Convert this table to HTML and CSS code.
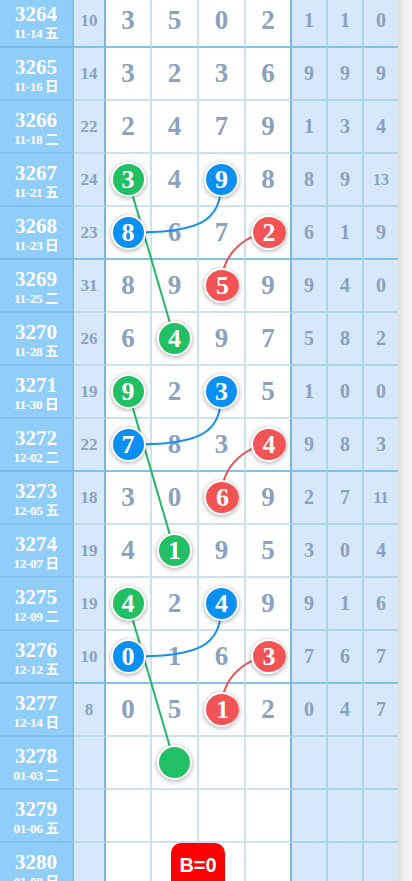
FILE: index.html
```html
<!DOCTYPE html>
<html lang="zh">
<head>
  <meta charset="UTF-8">
  <meta name="viewport" content="width=device-width, initial-scale=1.0">
  <title>走势图</title>
  <link rel="stylesheet" href="styles.css">
</head>
<body>
  <div class="board">
    <svg class="links" width="398" height="901" viewBox="0 0 398 901">
      <!-- green: col1 -> col2, three rows down -->
      <path class="lk green" d="M128 184.5 L174.5 343.5"/>
      <path class="lk green" d="M128 396.5 L174.5 555.5"/>
      <path class="lk green" d="M128 608.5 L174.5 767.5"/>
      <!-- blue: col3 -> col1, next row -->
      <path class="lk blue" d="M221.5 184.5 C221.5 229 198 237.5 128 237.5"/>
      <path class="lk blue" d="M221.5 396.5 C221.5 441 198 449.5 128 449.5"/>
      <path class="lk blue" d="M221.5 608.5 C221.5 653 198 661.5 128 661.5"/>
      <!-- red: col4 -> col3, next row -->
      <path class="lk red" d="M268 237.5 C250 239.5 221.5 254.5 221.5 290.5"/>
      <path class="lk red" d="M268 449.5 C250 451.5 221.5 466.5 221.5 502.5"/>
      <path class="lk red" d="M268 661.5 C250 663.5 221.5 678.5 221.5 714.5"/>
    </svg>

    <div class="row end">
      <div class="c issue"><b>3264</b><span>11-14 五</span></div>
      <div class="c miss">10</div>
      <div class="c d">3</div><div class="c d">5</div><div class="c d">0</div><div class="c d last">2</div>
      <div class="c r">1</div><div class="c r">1</div><div class="c r">0</div>
    </div>
    <div class="row">
      <div class="c issue"><b>3265</b><span>11-16 日</span></div>
      <div class="c miss">14</div>
      <div class="c d">3</div><div class="c d">2</div><div class="c d">3</div><div class="c d last">6</div>
      <div class="c r">9</div><div class="c r">9</div><div class="c r">9</div>
    </div>
    <div class="row">
      <div class="c issue"><b>3266</b><span>11-18 二</span></div>
      <div class="c miss">22</div>
      <div class="c d">2</div><div class="c d">4</div><div class="c d">7</div><div class="c d last">9</div>
      <div class="c r">1</div><div class="c r">3</div><div class="c r">4</div>
    </div>
    <div class="row">
      <div class="c issue"><b>3267</b><span>11-21 五</span></div>
      <div class="c miss">24</div>
      <div class="c d"><i class="ball g">3</i></div><div class="c d">4</div><div class="c d"><i class="ball b">9</i></div><div class="c d last">8</div>
      <div class="c r">8</div><div class="c r">9</div><div class="c r two">13</div>
    </div>
    <div class="row end">
      <div class="c issue"><b>3268</b><span>11-23 日</span></div>
      <div class="c miss">23</div>
      <div class="c d"><i class="ball b">8</i></div><div class="c d">6</div><div class="c d">7</div><div class="c d last"><i class="ball r">2</i></div>
      <div class="c r">6</div><div class="c r">1</div><div class="c r">9</div>
    </div>
    <div class="row">
      <div class="c issue"><b>3269</b><span>11-25 二</span></div>
      <div class="c miss">31</div>
      <div class="c d">8</div><div class="c d">9</div><div class="c d"><i class="ball r">5</i></div><div class="c d last">9</div>
      <div class="c r">9</div><div class="c r">4</div><div class="c r">0</div>
    </div>
    <div class="row">
      <div class="c issue"><b>3270</b><span>11-28 五</span></div>
      <div class="c miss">26</div>
      <div class="c d">6</div><div class="c d"><i class="ball g">4</i></div><div class="c d">9</div><div class="c d last">7</div>
      <div class="c r">5</div><div class="c r">8</div><div class="c r">2</div>
    </div>
    <div class="row">
      <div class="c issue"><b>3271</b><span>11-30 日</span></div>
      <div class="c miss">19</div>
      <div class="c d"><i class="ball g">9</i></div><div class="c d">2</div><div class="c d"><i class="ball b">3</i></div><div class="c d last">5</div>
      <div class="c r">1</div><div class="c r">0</div><div class="c r">0</div>
    </div>
    <div class="row end">
      <div class="c issue"><b>3272</b><span>12-02 二</span></div>
      <div class="c miss">22</div>
      <div class="c d"><i class="ball b">7</i></div><div class="c d">8</div><div class="c d">3</div><div class="c d last"><i class="ball r">4</i></div>
      <div class="c r">9</div><div class="c r">8</div><div class="c r">3</div>
    </div>
    <div class="row">
      <div class="c issue"><b>3273</b><span>12-05 五</span></div>
      <div class="c miss">18</div>
      <div class="c d">3</div><div class="c d">0</div><div class="c d"><i class="ball r">6</i></div><div class="c d last">9</div>
      <div class="c r">2</div><div class="c r">7</div><div class="c r two">11</div>
    </div>
    <div class="row">
      <div class="c issue"><b>3274</b><span>12-07 日</span></div>
      <div class="c miss">19</div>
      <div class="c d">4</div><div class="c d"><i class="ball g">1</i></div><div class="c d">9</div><div class="c d last">5</div>
      <div class="c r">3</div><div class="c r">0</div><div class="c r">4</div>
    </div>
    <div class="row">
      <div class="c issue"><b>3275</b><span>12-09 二</span></div>
      <div class="c miss">19</div>
      <div class="c d"><i class="ball g">4</i></div><div class="c d">2</div><div class="c d"><i class="ball b">4</i></div><div class="c d last">9</div>
      <div class="c r">9</div><div class="c r">1</div><div class="c r">6</div>
    </div>
    <div class="row end">
      <div class="c issue"><b>3276</b><span>12-12 五</span></div>
      <div class="c miss">10</div>
      <div class="c d"><i class="ball b">0</i></div><div class="c d">1</div><div class="c d">6</div><div class="c d last"><i class="ball r">3</i></div>
      <div class="c r">7</div><div class="c r">6</div><div class="c r">7</div>
    </div>
    <div class="row">
      <div class="c issue"><b>3277</b><span>12-14 日</span></div>
      <div class="c miss">8</div>
      <div class="c d">0</div><div class="c d">5</div><div class="c d"><i class="ball r">1</i></div><div class="c d last">2</div>
      <div class="c r">0</div><div class="c r">4</div><div class="c r">7</div>
    </div>
    <div class="row">
      <div class="c issue"><b>3278</b><span>01-03 二</span></div>
      <div class="c miss"></div>
      <div class="c d"></div><div class="c d"><i class="ball g"></i></div><div class="c d"></div><div class="c d last"></div>
      <div class="c r"></div><div class="c r"></div><div class="c r"></div>
    </div>
    <div class="row">
      <div class="c issue"><b>3279</b><span>01-06 五</span></div>
      <div class="c miss"></div>
      <div class="c d"></div><div class="c d"></div><div class="c d"></div><div class="c d last"></div>
      <div class="c r"></div><div class="c r"></div><div class="c r"></div>
    </div>
    <div class="row end">
      <div class="c issue"><b>3280</b><span>01-08 日</span></div>
      <div class="c miss"></div>
      <div class="c d"></div><div class="c d"></div><div class="c d"></div><div class="c d last"></div>
      <div class="c r"></div><div class="c r"></div><div class="c r"></div>
    </div>
  </div>

  <div class="badge">B=0</div>
</body>
</html>
```

FILE: styles.css
```css
body {
  margin: 0;
  background: #f4f4f4;
  font-family: 'Liberation Serif', 'Noto Sans CJK SC', serif;
  overflow: hidden;
}
.board {
  position: relative;
  width: 398px;
  margin-top: -5px;
  background: #fff;
  box-shadow: 2px 0 8px rgba(0, 0, 0, 0.14);
}
.links {
  position: absolute;
  top: 0;
  left: 0;
  z-index: 1;
  pointer-events: none;
}
.lk {
  fill: none;
  stroke-width: 2;
}
.lk.green { stroke: #22b863; }
.lk.blue { stroke: #1590ea; }
.lk.red { stroke: #e85456; }

.row {
  display: grid;
  grid-template-columns: 74px 32px 46px 47px 47px 46px 36px 36px 34px;
  height: 53px;
}
.c {
  box-sizing: border-box;
  display: flex;
  align-items: center;
  justify-content: center;
  border-right: 2px solid #cbe2f0;
  border-bottom: 2px solid #cbe2f0;
  font-weight: bold;
  color: #8aa1c0;
}
.issue {
  flex-direction: column;
  background: #91cdf9;
  color: #fff;
  padding-top: 3px;
  border-right-color: #7fbfe8;
  border-bottom-color: #7fc0ec;
}
.issue b {
  font-size: 21px;
  line-height: 22px;
}
.issue span {
  font-size: 13.5px;
  line-height: 17px;
  letter-spacing: -0.5px;
}
.miss {
  background: #d6e8f9;
  font-size: 17px;
  border-right: 2px solid #7fb3d6;
  border-bottom-color: #bcdaee;
}
.d {
  font-size: 27px;
}
.d.last {
  border-right: 2px solid #7fb3d6;
}
.r {
  background: #d6e8f9;
  font-size: 20px;
  border-right-color: #acd3ec;
  border-bottom-color: #acd3ec;
}
.r:last-child {
  border-right: none;
}
.r.two {
  font-size: 16px;
}
.row.end .c {
  border-bottom-color: #85c1e3;
}
.row.end .issue {
  border-bottom-color: #7ab8e2;
}

.ball {
  position: relative;
  z-index: 2;
  box-sizing: border-box;
  width: 35px;
  height: 35px;
  border: 2px solid #fff;
  border-radius: 50%;
  display: flex;
  align-items: center;
  justify-content: center;
  color: #fff;
  font-style: normal;
  font-size: 26px;
  box-shadow: 0 1px 5px rgba(0, 0, 0, 0.35);
}
.ball.g { background: #22bf64; }
.ball.b { background: #0b8ff0; }
.ball.r { background: #f25355; }

.badge {
  position: fixed;
  left: 171px;
  top: 843px;
  width: 54px;
  height: 44px;
  box-sizing: border-box;
  padding-top: 10px;
  background: #ff0000;
  border-radius: 10px 10px 0 0;
  color: #fff;
  font-family: 'Liberation Sans', Arial, sans-serif;
  font-weight: bold;
  font-size: 20px;
  line-height: 24px;
  text-align: center;
  z-index: 3;
}
```
